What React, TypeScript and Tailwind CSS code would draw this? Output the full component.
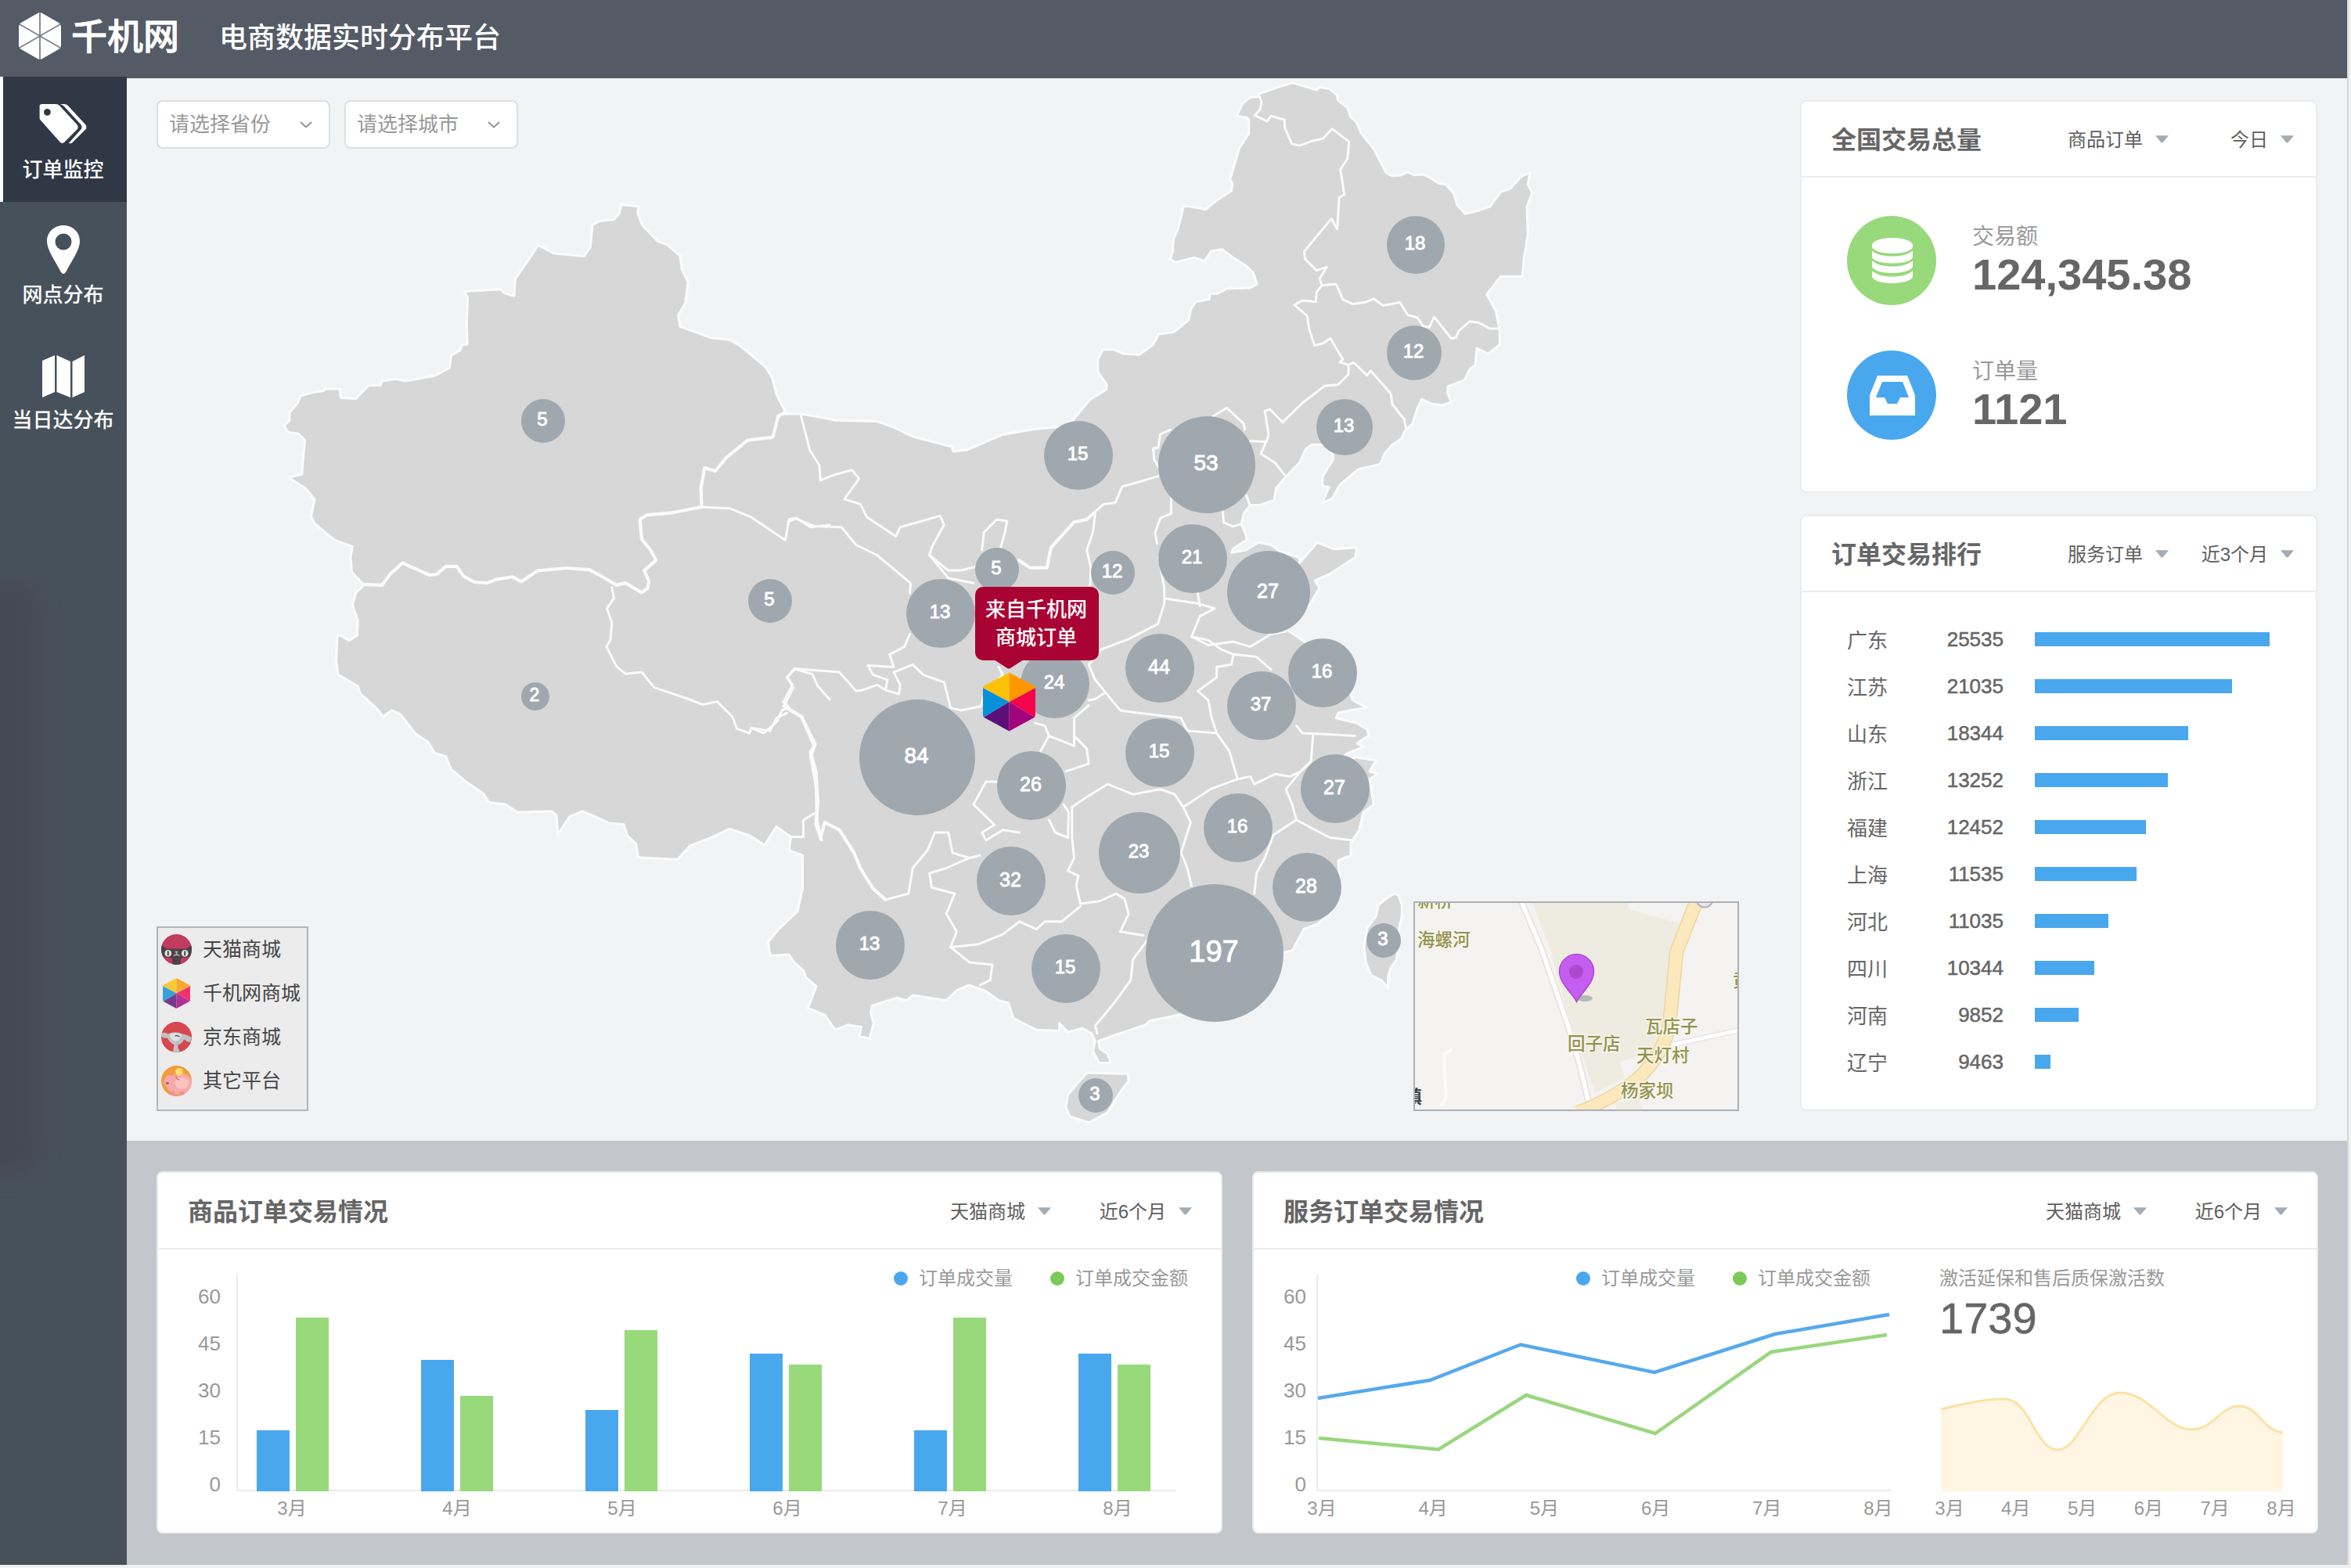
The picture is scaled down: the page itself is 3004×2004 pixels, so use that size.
import React from "react";

type Tile = { x: number; y: number; sx: number; sy: number };

// Survey tiles: each one has its own origin and scale on the shared canvas.
const WEST: Tile = { x: 340, y: 240, sx: 0.4592, sy: 0.5612 };
const CORE: Tile = { x: 960, y: 420, sx: 0.5357, sy: 0.6505 };
const NORTH: Tile = { x: 1360, y: 90, sx: 0.3954, sy: 0.3827 };
const ISLE: Tile = { x: 1720, y: 1120, sx: 0.3571, sy: 0.3333 };

const trace = (t: Tile, s: string) =>
  s
    .trim()
    .split(/\s+/)
    .map((p) => {
      const [a, b] = p.split(",").map(Number);
      return `${(t.x + a * t.sx).toFixed(1)},${(t.y + b * t.sy).toFixed(1)}`;
    })
    .join(" ");

const MAINLAND = [
  trace(
    WEST,
    "50,543 65,530 65,512 88,490 95,474 130,466 160,462 165,458 205,458 208,478 250,480 285,450 318,450 322,440 362,435 388,440 470,428 510,410 515,382 540,370 545,358 560,356 558,310 561,250 552,236 652,231 665,240 690,246 693,208 735,158 757,130 800,149 885,156 902,135 908,85 925,76 968,72 982,60 988,38 1036,42 1034,58 1047,85 1090,122 1115,129 1152,155 1157,185 1174,215 1167,262 1147,290 1152,316 1200,330 1240,342 1290,346 1320,360 1390,408 1408,432 1420,470 1442,505 1443,515 1490,515 1560,525"
  ),
  trace(CORE, "200,180 300,182 335,192 385,212 478,232 482,241 515,238 600,208 670,198 735,193 765,182 790,157"),
  trace(
    NORTH,
    "82,1100 135,1065 137,1049 108,1008 108,965 125,932 160,932 190,946 242,949 285,918 305,880 355,873 402,833 408,800 424,773 468,764 470,746 495,745 525,728 600,726 623,714 610,675 590,655 545,625 510,598 475,603 453,637 420,625 360,641 342,632 350,605 352,565 366,533 386,450 457,464 492,434 540,402 543,378 535,365 565,260 596,210 596,165 588,157 557,153 575,112 600,90 628,88 628,78 695,54 738,41 815,65 825,56 858,62 880,82 885,100 915,125 925,155 943,172 960,210 1000,262 1040,342 1060,352 1085,350 1110,340 1130,349 1160,347 1185,360 1210,377 1232,380 1258,410 1270,450 1295,479 1330,470 1375,455 1410,405 1440,395 1475,355 1505,340 1498,380 1512,410 1495,455 1498,550 1485,630 1480,688 1410,688 1390,715 1365,748 1395,805 1407,870 1407,915 1370,947 1333,928 1328,985 1310,997 1292,1035 1240,1055 1238,1075 1250,1108 1220,1118 1185,1113 1155,1098 1140,1130 1125,1180 1100,1205 1090,1230 1060,1250 1035,1280 1020,1315 950,1332 890,1385 865,1430 832,1446 855,1392 833,1388 835,1355 868,1300 868,1285 850,1250 800,1250 780,1265 760,1310 715,1358 685,1395 678,1435 630,1452 600,1452 580,1480 572,1515 585,1545"
  ),
  trace(
    CORE,
    "1182,415 1150,432 1145,440 1180,435 1210,420 1240,425 1260,437 1308,450 1308,460 1350,420 1390,433 1445,430 1440,450 1380,482 1345,495 1355,510 1330,545 1275,590 1310,610 1370,640 1420,700 1435,730 1468,745 1430,750 1400,755 1395,765 1445,775 1470,788 1472,800 1445,815 1460,822 1420,835 1400,855 1440,842 1490,848 1475,870 1495,875 1475,885 1480,910 1485,935 1460,950 1450,985 1430,1010 1430,1035 1400,1045 1405,1100 1380,1150 1350,1170 1318,1180 1290,1222 1260,1228 1240,1280 1150,1330 1010,1350 950,1360 940,1368 860,1390 828,1400 832,1415 850,1425 858,1443 830,1443 815,1420 820,1400 812,1385 790,1375 755,1382 735,1365 735,1380 680,1378 625,1355 613,1325 590,1320 560,1302 520,1290 490,1300 465,1320 385,1310 370,1320 348,1315 288,1330 285,1345 292,1365 282,1395 258,1390 262,1372 230,1368 200,1378 175,1348 135,1335 155,1292 130,1275 125,1262 102,1245 90,1230 45,1232 40,1205 65,1180 110,1145 122,1100 122,1035 90,1025"
  ),
  trace(
    WEST,
    "1460,1478 1420,1455 1387,1497 1345,1475 1290,1460 1230,1483 1180,1498 1145,1530 1035,1525 1030,1495 1005,1475 995,1450 955,1447 910,1430 880,1420 845,1432 812,1473 808,1430 795,1420 700,1422 665,1404 620,1400 605,1380 560,1355 515,1325 500,1295 470,1288 450,1262 415,1243 375,1200 350,1190 325,1205 310,1188 262,1152 255,1135 200,1108 195,1080 198,1020 210,1020 230,1031 253,1020 255,985 240,950 250,922 272,905 238,875 235,840 240,817 190,802 135,765 125,748 135,710 110,685 62,660 100,652 103,615 108,575 90,560 62,557"
  ),
].join(" ");

const ISLANDS = [
  trace(CORE, "800,1462 898,1464 900,1478 880,1500 850,1540 805,1560 760,1548 750,1530 755,1505"),
  trace(
    ISLE,
    "172,66 187,72 200,110 200,150 190,200 188,270 180,320 160,350 150,385 150,430 128,400 90,380 70,330 64,270 75,200 108,150 115,110 150,80"
  ),
];

const THICK = [
  trace(
    WEST,
    "272,903 322,905 345,880 380,854 400,862 455,882 475,880 500,862 530,862 550,885 580,898 615,900 640,892 685,886 710,897 755,872 835,866 900,870 945,890 975,905 1000,900 1045,922 1062,912 1065,895 1052,872 1085,848 1070,825 1045,800 1040,755 1060,745 1130,740 1212,727 1210,685 1220,638 1250,645 1280,615 1340,575 1410,568 1425,520 1443,512"
  ),
  trace(WEST, "1440,1170 1460,1190 1490,1205 1528,1268 1515,1285 1530,1330 1535,1400 1530,1450 1545,1485"),
  trace(CORE, "78,742 120,762 150,820 142,840 155,900 157,970 165,1000 175,970 210,985 245,1030 260,1060 290,1100 320,1122"),
  trace(CORE, "638,455 665,470 705,470 715,430 770,380 800,375 820,360"),
];

const THIN = [
  trace(
    WEST,
    "962,910 968,935 948,958 962,990 958,1030 947,1045 975,1090 1000,1107 1045,1103 1080,1138 1160,1160 1215,1177 1255,1170 1298,1205 1310,1232 1345,1242 1350,1230 1385,1242 1422,1215 1435,1190 1450,1185"
  ),
  trace(WEST, "1212,727 1290,730 1350,750 1445,803 1455,755 1475,752 1515,773 1568,768"),
  trace(WEST, "1568,1165 1535,1135 1520,1108 1470,1095 1450,1115 1465,1132 1440,1170"),
  trace(WEST, "1525,1425 1495,1440 1495,1478 1460,1478"),
  trace(
    CORE,
    "118,170 140,240 162,268 165,298 195,288 240,278 257,295 222,335 260,345 275,370 345,408 355,390 450,368 460,385 430,430 425,445 470,475 500,475 535,468"
  ),
  trace(CORE, "88,380 105,373 150,388 215,390 250,425 300,445 380,500 378,520"),
  trace(CORE, "425,445 470,490 530,500"),
  trace(
    CORE,
    "378,600 365,625 330,640 340,665 278,662 290,680 325,690 320,710 352,718 355,700 340,675 385,660 410,680 460,695 475,745 500,750 548,742 555,720 600,680 590,665"
  ),
  trace(CORE, "320,710 300,700 265,710 250,712 210,675 130,670 105,668 85,685 100,705 78,742"),
  trace(CORE, "0,785 45,790 60,765 85,755"),
  trace(CORE, "320,1122 375,1110 385,1060 420,1025 438,990 470,990 480,1030 520,1040 545,1035"),
  trace(CORE, "550,435 555,400 585,375 610,378 605,400 595,430"),
  trace(CORE, "820,360 840,345 868,342 885,310 930,300 970,290"),
  trace(CORE, "820,365 815,400 800,435 810,470 808,505"),
  trace(CORE, "972,450 985,510 985,540 970,580 900,610 835,630 805,660 820,690 845,715 820,728 805,730"),
  trace(CORE, "845,715 880,750 920,755 1025,765 1040,790 1110,795 1140,830 1160,885"),
  trace(
    CORE,
    "985,530 1065,540 1105,550 1070,565 1050,605 1090,612 1120,630 1150,640 1145,660 1110,665 1110,685 1065,712 1090,730 1098,765 1110,795"
  ),
  trace(CORE, "1050,605 1090,622 1150,615 1190,625 1240,600 1275,595"),
  trace(CORE, "1065,520 1070,545"),
  trace(CORE, "1150,640 1205,645 1240,670"),
  trace(CORE, "1300,780 1315,795 1375,797 1440,800"),
  trace(CORE, "1340,797 1335,850 1310,870 1275,905"),
  trace(CORE, "1160,885 1190,880 1200,895 1250,875 1285,880 1310,870"),
  trace(CORE, "677,775 700,780 710,800 690,830"),
  trace(CORE, "710,800 770,820 770,765 805,740"),
  trace(CORE, "770,800 800,825 805,855 750,870"),
  trace(CORE, "765,940 800,920 850,895 910,915 975,905 1010,915 1030,940 1095,905 1160,885"),
  trace(
    CORE,
    "765,940 765,1000 770,1040 755,1065 780,1075 775,1095 785,1130 830,1125 870,1110 890,1120 900,1150 880,1185 935,1192"
  ),
  trace(CORE, "1030,940 1048,970 1025,1030 1040,1060 1050,1095"),
  trace(CORE, "1275,905 1290,935 1300,965 1245,995 1225,1040 1205,1070 1200,1110"),
  trace(CORE, "1300,965 1345,985 1380,1000 1430,1005"),
  trace(
    CORE,
    "785,1135 740,1165 700,1165 680,1180 640,1165 600,1190 540,1210 475,1215 490,1185 465,1150 485,1110 430,1098 425,1070 465,1060 520,1040"
  ),
  trace(CORE, "475,1215 520,1245 575,1250 570,1280 545,1290"),
  trace(CORE, "590,890 560,890 530,935 580,975 550,990 560,1005 600,985 640,990"),
  trace(CORE, "710,965 725,990 755,1000 757,950 745,935"),
  trace(CORE, "950,1195 910,1240 905,1280 870,1320 820,1370 825,1385"),
  trace(
    NORTH,
    "628,80 637,105 633,130 615,150 655,170 668,152 712,165 712,190 735,245 760,251 800,236 835,228 865,195 920,238 915,295 892,330 905,415 888,425 882,530 863,495 775,605 778,630 815,668 848,657 825,695 832,718"
  ),
  trace(
    NORTH,
    "832,718 878,713 900,765 932,780 970,775 1000,763 1030,785 1085,775 1110,817 1140,825 1160,855 1180,857 1195,823 1250,895 1265,893 1275,870 1310,838 1340,843 1375,862 1405,862"
  ),
  trace(NORTH, "832,718 815,740 812,773 770,768 743,783 785,820 790,860 808,918 835,912 860,895 900,965 890,975 918,983"),
  trace(NORTH, "918,983 935,976 978,1018 990,1003 1055,1080 1060,1115 1098,1165 1105,1200"),
  trace(
    NORTH,
    "918,983 918,1015 885,1050 842,1053 770,1110 705,1175 665,1132 648,1137 660,1220 635,1280 680,1310 715,1355"
  ),
  trace(NORTH, "480,1155 525,1127 580,1180 583,1200"),
  trace(NORTH, "600,1238 650,1240"),
  trace(NORTH, "343,1200 310,1215 303,1260 287,1262 290,1300 305,1325"),
  trace(NORTH, "345,1430 345,1480 310,1495 293,1545 300,1580"),
  trace(NORTH, "588,1420 600,1452"),
  trace(NORTH, "512,1475 515,1510 545,1523 572,1515"),
];

// [label, centre x, centre y, diameter, font size]
const BUBBLES: [string, number, number, number, number][] = [
  ["5", 694, 538, 56, 24],
  ["5", 984, 768, 56, 24],
  ["2", 684, 890, 36, 23],
  ["15", 1378, 582, 88, 24],
  ["53", 1542, 594, 124, 28],
  ["21", 1524, 714, 88, 24],
  ["12", 1422, 732, 56, 24],
  ["27", 1621, 757, 106, 25],
  ["5", 1274, 728, 56, 24],
  ["13", 1202, 784, 88, 24],
  ["24", 1348, 874, 88, 24],
  ["44", 1482, 854, 88, 25],
  ["16", 1690, 860, 88, 24],
  ["37", 1612, 902, 88, 24],
  ["84", 1172, 968, 148, 28],
  ["15", 1482, 962, 88, 24],
  ["26", 1318, 1004, 88, 25],
  ["27", 1706, 1008, 88, 25],
  ["23", 1456, 1090, 104, 24],
  ["16", 1582, 1058, 88, 24],
  ["32", 1292, 1126, 88, 25],
  ["28", 1670, 1134, 88, 25],
  ["197", 1552, 1218, 176, 38],
  ["13", 1112, 1208, 88, 24],
  ["15", 1362, 1238, 88, 24],
  ["3", 1400, 1400, 44, 24],
  ["3", 1768, 1202, 44, 24],
  ["18", 1809, 313, 74, 24],
  ["12", 1807, 451, 70, 24],
  ["13", 1718, 546, 72, 24],
];

const RANKS: [string, string, number][] = [
  ["广东", "25535", 300],
  ["江苏", "21035", 252],
  ["山东", "18344", 196],
  ["浙江", "13252", 170],
  ["福建", "12452", 142],
  ["上海", "11535", 130],
  ["河北", "11035", 94],
  ["四川", "10344", 76],
  ["河南", "9852", 56],
  ["辽宁", "9463", 20],
];

const MONTHS = ["3月", "4月", "5月", "6月", "7月", "8月"];
const BARS: [number, number][] = [
  [78, 222],
  [168, 122],
  [104, 206],
  [176, 162],
  [78, 222],
  [176, 162],
];

function ColorHex({ className }: { className: string }) {
  return (
    <svg viewBox="0 0 68 76" className={className}>
      <path d="M34 38V0L2 17Q0 18 0 20Z" fill="#ffc107" />
      <path d="M34 38V0L66 17Q68 18 68 20Z" fill="#ff9800" />
      <path d="M34 38L68 20V54Q68 57 67 58Z" fill="#f4044b" />
      <path d="M34 38L67 58L34 76Z" fill="#a1047d" />
      <path d="M34 38L1 58L34 76Z" fill="#5b0f77" />
      <path d="M34 38L0 20V54Q0 57 1 58Z" fill="#0790da" />
    </svg>
  );
}

function Dropdown({ label, wide }: { label: string; wide?: string }) {
  return (
    <div className={`flex items-center justify-end gap-4 text-2xl leading-8 text-[#5e5e5e] ${wide ?? ""}`}>
      <span className="pt-0.5 whitespace-nowrap">{label}</span>
      <svg viewBox="0 0 18 10" className="h-2.5 w-[17px]">
        <path d="M0 0H18L11 8.5Q9 11 7 8.5Z" fill="#a3abb3" />
      </svg>
    </div>
  );
}

function Card({
  title,
  first,
  second,
  className,
  headClass,
  wide,
  children,
}: {
  title: string;
  first: string;
  second: string;
  className: string;
  headClass: string;
  wide: string;
  children: React.ReactNode;
}) {
  return (
    <section className={`flex shrink-0 flex-col rounded-lg border-2 border-[#ebecee] bg-white ${className}`}>
      <div className={`flex shrink-0 items-center border-b-2 border-[#ebecee] pl-[38px] ${headClass}`}>
        <h2 className="flex-1 pt-0.5 text-[32px] leading-10 font-bold text-[#666]">{title}</h2>
        <Dropdown label={first} />
        <Dropdown label={second} wide={wide} />
      </div>
      {children}
    </section>
  );
}

function Select({ label }: { label: string }) {
  return (
    <div className="flex h-[62px] w-[222px] items-center justify-between rounded-lg border-2 border-[#dcdee0] bg-white pr-[21px] pl-3.5">
      <span className="text-[26px] leading-8 text-[#999]">{label}</span>
      <svg viewBox="0 0 16 9" className="h-[9px] w-4" fill="none" stroke="#8f8f8f" strokeWidth="1.8">
        <path d="M1 1L8 7.5L15 1" />
      </svg>
    </div>
  );
}

function NavItem({ label, active, children }: { label: string; active?: boolean; children: React.ReactNode }) {
  return (
    <div
      className={`flex h-40 shrink-0 flex-col items-center pt-[35px] ${
        active ? "border-l-4 border-white bg-[#303846] pr-[5px]" : "pr-px"
      }`}
    >
      <div className="flex h-[68px] items-start justify-center">{children}</div>
      <span className="text-[26px] leading-8 font-medium whitespace-nowrap text-white">{label}</span>
    </div>
  );
}

function YAxis({ className }: { className: string }) {
  return (
    <div className={`flex shrink-0 flex-col text-right text-[26px] text-[#999] ${className}`}>
      {["60", "45", "30", "15", "0"].map((v) => (
        <span key={v} className="h-[60px] shrink-0 leading-[58px]">
          {v}
        </span>
      ))}
    </div>
  );
}

function ChartLegend({ className }: { className: string }) {
  return (
    <div className={`absolute flex items-center text-2xl leading-[30px] text-[#999] ${className}`}>
      <i className="mr-3.5 size-[18px] rounded-full bg-[#49a7ee]" />
      <span>订单成交量</span>
      <i className="mr-3.5 ml-12 size-[18px] rounded-full bg-[#7aca57]" />
      <span>订单成交金额</span>
    </div>
  );
}

function MonthRow({ className }: { className: string }) {
  return (
    <div className={`flex justify-between text-2xl leading-[30px] text-[#999] ${className}`}>
      {MONTHS.map((m) => (
        <span key={m} className="w-10 text-center">
          {m}
        </span>
      ))}
    </div>
  );
}

function ChinaMap() {
  return (
    <svg viewBox="162 100 2139 1358" className="absolute top-0 left-0 h-[1358px] w-[2139px]">
      <g fill="#d7d7d7" stroke="#fafbfb" strokeLinejoin="round">
        <polygon points={MAINLAND} strokeWidth="3.2" />
        {ISLANDS.map((p) => (
          <polygon key={p} points={p} strokeWidth="3.2" />
        ))}
      </g>
      <g fill="none" stroke="#fafbfb" strokeLinejoin="round" strokeLinecap="round">
        {THIN.map((p) => (
          <polyline key={p} points={p} strokeWidth="3" />
        ))}
        {THICK.map((p) => (
          <polyline key={p} points={p} strokeWidth="4.2" />
        ))}
      </g>
    </svg>
  );
}

function MiniMap() {
  const label = (x: number, y: number, t: string) => (
    <text
      x={x}
      y={y + 8}
      fontSize="22.5"
      fill="#94934f"
      stroke="#f7f6ee"
      strokeWidth="3"
      paintOrder="stroke"
      fontWeight="500"
    >
      {t}
    </text>
  );
  return (
    <div className="absolute top-[1052px] left-[1644px] h-[268px] w-[416px] overflow-hidden border-2 border-[#abb1b7] bg-[#f4f3f1]">
      <svg viewBox="2 2 412 264" className="h-full w-full">
        <g transform="scale(.3571 .3333) translate(-241 -96)" fill="none">
          <path
            d="M665 96H1000L1020 130L1195 180L1160 290L1135 540L1100 670L980 712L995 775L890 830L780 480L730 280Z"
            fill="#eeece1"
          />
          <path d="M965 870L1050 850L1060 900H965Z" fill="#eeece1" />
          <path d="M1170 645L1406 590" stroke="#e6e4e4" strokeWidth="22" />
          <path d="M1170 645L1406 590" stroke="#ffffff" strokeWidth="14" />
          <path d="M625 90L700 280L790 560Q840 720 868 870" stroke="#e5e4e4" strokeWidth="25" />
          <path d="M625 90L700 280L790 560Q840 720 868 870" stroke="#ffffff" strokeWidth="15" />
          <path d="M380 665L350 680L358 850L340 880" stroke="#fbfbfb" strokeWidth="12" />
          <path d="M1255 90L1182 292L1158 560Q1140 680 1040 780Q960 850 830 905" stroke="#f0d7a2" strokeWidth="52" />
          <path d="M1255 90L1182 292L1158 560Q1140 680 1040 780Q960 850 830 905" stroke="#fbe8bd" strokeWidth="43" />
        </g>
        <circle cx="372" cy="-3" r="10.5" fill="#e9e8e8" stroke="#b5b3b3" strokeWidth="2" />
        {label(5, -1, "新桥")}
        {label(5, 49, "海螺河")}
        {label(197, 182, "回子店")}
        {label(296, 160, "瓦店子")}
        {label(285, 197, "天灯村")}
        {label(265, 242, "杨家坝")}
        {label(408, 101, "黄")}
        <text x="-12" y="258" fontSize="23" fontWeight="700" fill="#444">
          镇
        </text>
        <ellipse cx="219" cy="124" rx="10" ry="4" fill="#8b9a9a" opacity=".6" />
        <path
          d="M208.500 128.500C203 117 186.500 105 186.500 89.500A22 22 0 0 1 230.500 89.500C230.500 105 214 117 208.500 128.500Z"
          fill="#c45df0"
          stroke="#ad4ad2"
          strokeWidth="1.500"
        />
        <circle cx="208" cy="90" r="9" fill="#ad49cd" />
      </svg>
    </div>
  );
}

function TmallIcon() {
  return (
    <svg viewBox="0 0 40 40" className="size-[39px]">
      <clipPath id="tm">
        <circle cx="20" cy="20" r="20" />
      </clipPath>
      <g clipPath="url(#tm)">
        <rect width="40" height="40" fill="#c23a5c" />
        <path d="M0 14L7 19H33L40 14V28Q36 31 26 31L25 40H15L14 31Q4 31 0 28Z" fill="#4a4346" />
        <circle cx="9" cy="25" r="4.500" fill="#e4dfe0" />
        <circle cx="31" cy="25" r="4.500" fill="#e4dfe0" />
        <path d="M8 22H10V28H8ZM30 22H32V28H30Z" fill="#4a4346" />
        <path d="M18 23H22M20 23V27M16 28Q20 26 24 28" stroke="#bdb6b8" strokeWidth="1.500" fill="none" />
      </g>
    </svg>
  );
}

function DogIcon() {
  return (
    <svg viewBox="0 0 40 40" className="size-[39px]">
      <clipPath id="jd">
        <circle cx="20" cy="20" r="20" />
      </clipPath>
      <g clipPath="url(#jd)">
        <rect width="40" height="40" fill="#d8464e" />
        <path
          d="M0 15Q5 13 9 16Q18 11 28 16Q35 17 40 21L38 27Q33 26 30 23Q27 29 22 30V34L25 40H15L17 30Q11 27 8 21Q3 22 0 19Z"
          fill="#c0c1c4"
        />
        <path d="M11 17Q18 12 27 17Q23 27 17 25Q12 23 11 17Z" fill="#dfe0e1" />
        <path d="M18 18.500Q21 17 24 19.500" stroke="#55585c" strokeWidth="1.600" fill="none" />
      </g>
    </svg>
  );
}

function PiggyIcon() {
  return (
    <svg viewBox="0 0 40 40" className="size-[39px]">
      <clipPath id="pg">
        <circle cx="20" cy="20" r="20" />
      </clipPath>
      <g clipPath="url(#pg)">
        <rect width="40" height="40" fill="#f29b3e" />
        <ellipse cx="24" cy="24" rx="17" ry="14" fill="#f6a9ab" />
        <path d="M6 14L12 12L16 20L12 30Q5 28 3 22Z" fill="#f6a9ab" />
        <path d="M12 34H18V40H12ZM24 34H30V40H24Z" fill="#ee8f95" />
        <ellipse cx="27" cy="23" rx="9" ry="8" fill="#fbc2c0" />
        <circle cx="23.500" cy="8" r="5" fill="#ffe066" />
        <path d="M19 13Q20 19 24 18" stroke="#d9777f" strokeWidth="1.400" fill="none" />
        <ellipse cx="8" cy="23" rx="2.200" ry="1.500" fill="#a85a60" />
      </g>
    </svg>
  );
}

function MallLegend() {
  const rows: [string, React.ReactNode][] = [
    ["天猫商城", <TmallIcon key="t" />],
    ["千机网商城", <ColorHex key="q" className="mx-0.5 h-[39px] w-[35px] opacity-80" />],
    ["京东商城", <DogIcon key="j" />],
    ["其它平台", <PiggyIcon key="p" />],
  ];
  return (
    <div className="absolute top-[1084px] left-[38px] h-[236px] w-[194px] border-2 border-[#b1b4b9] bg-[#ececec]">
      {rows.map(([name, icon]) => (
        <div key={name} className="flex h-14 items-start pt-2">
          <span className="flex w-[57px] justify-start pl-1">{icon}</span>
          <span className="pt-[3px] text-[25px] leading-8 whitespace-nowrap text-[#444]">{name}</span>
        </div>
      ))}
    </div>
  );
}

function OrderTip() {
  return (
    <div className="absolute top-[650px] left-[1084px] w-[158px]">
      <div className="rounded-[10px] bg-[#a90333] py-[11px] pr-0.5 text-center text-[26px] leading-9 font-medium text-white">
        来自千机网
        <br />
        商城订单
      </div>
      <svg viewBox="0 0 38 12" className="-mt-px ml-6 h-3 w-[38px]">
        <path d="M0 0H38L21 11Q19 12 17 11Z" fill="#a90333" />
      </svg>
      <ColorHex className="mt-1 ml-[10px] h-[76px] w-[67px]" />
    </div>
  );
}

function Summary() {
  return (
    <div className="flex flex-col gap-[58px] px-[58px] pt-[49px]">
      <div className="flex items-start gap-[46px]">
        <div className="flex size-[114px] items-center justify-center rounded-full bg-[#98d97c]">
          <svg viewBox="0 0 52 58" className="ml-0.5 h-[58px] w-[52px]" fill="#fff">
            <path d="M0 9.500C0 4 12 0 26 0S52 4 52 9.500V11C52 16 40 20 26 20S0 16 0 11Z" />
            <path d="M0 16.500C5 21 15 23.500 26 23.500S47 21 52 16.500V24C52 29 40 32.500 26 32.500S0 29 0 24Z" />
            <path d="M0 29C5 34 15 36.500 26 36.500S47 34 52 29V36C52 41 40 45 26 45S0 41 0 36Z" />
            <path d="M0 42C5 47 15 49.500 26 49.500S47 47 52 42V49C52 54 40 58 26 58S0 54 0 49Z" />
          </svg>
        </div>
        <div className="pt-[9px]">
          <div className="text-[28px] leading-9 text-[#999]">交易额</div>
          <div className="text-[56px] leading-[60px] font-bold text-[#666]">124,345.38</div>
        </div>
      </div>
      <div className="flex items-start gap-[46px]">
        <div className="flex size-[114px] items-center justify-center rounded-full bg-[#49a7ee]">
          <svg viewBox="0 0 58 51" className="ml-0.5 h-[51px] w-[58px]" fill="#fff" fillRule="evenodd">
            <path d="M10 0H48L58 25V51H0V25ZM16 8L8 28H19L23 36H35L39 28H50L42 8Z" />
          </svg>
        </div>
        <div className="pt-[9px]">
          <div className="text-[28px] leading-9 text-[#999]">订单量</div>
          <div className="text-[56px] leading-[60px] font-bold text-[#666]">1121</div>
        </div>
      </div>
    </div>
  );
}

export default function App() {
  return (
    <div className="h-[2004px] w-[3004px] overflow-hidden bg-[#f0f0f1] font-['Liberation_Sans','Noto_Sans_CJK_SC',sans-serif]">
      <div className="flex h-[2000px] w-[3001px] flex-col border-r-2 border-[#d5d7da]">
        <header className="flex h-[100px] shrink-0 items-center bg-[#545b66] pb-1.5 pl-6 text-white">
          <svg viewBox="0 0 54 60" className="-mt-0.5 h-[60px] w-[54px]">
            <path
              d="M24 1Q27 -1 30 1L51 13Q54 15 54 18V42Q54 45 51 47L30 59Q27 61 24 59L3 47Q0 45 0 42V18Q0 15 3 13Z"
              fill="#fff"
            />
            <path d="M27 0V60M1 15L53 45M53 15L1 45" stroke="#7d828a" strokeWidth="1.800" />
          </svg>
          <span className="ml-[13px] text-[46px] leading-[60px] font-medium [-webkit-text-stroke:0.8px_#fff]">
            千机网
          </span>
          <h1 className="ml-[51px] pt-[3px] text-[36px] leading-[50px] font-medium">电商数据实时分布平台</h1>
        </header>

        <div className="flex min-h-0 flex-1">
          <nav className="relative -mt-0.5 flex w-[162px] shrink-0 flex-col overflow-hidden bg-[#47515b]">
            <div className="absolute top-[650px] -left-5 h-[750px] w-[66px] rounded-r-3xl bg-[#454955] blur-[14px]" />
            <NavItem label="订单监控" active>
              <svg viewBox="0 0 62 52" className="h-[51px] w-[62px]" fill="#fff" fillRule="evenodd">
                <path d="M3 0H21Q24 0 26 2L49 27Q51 30 49 33L32 50Q29 52 27 50L2 22Q0 20 0 18V3Q0 0 3 0ZM10 6A4.500 4.500 0 1 0 10 15A4.500 4.500 0 1 0 10 6Z" />
                <path d="M26 0H32Q35 0 37 2L60 27Q62 30 60 33L43 50Q41 52 38 51L54 33Q56 30 54 27L32 3Q29 0 26 0Z" />
              </svg>
            </NavItem>
            <NavItem label="网点分布">
              <svg viewBox="0 0 42 62" className="-mt-[5px] h-[62px] w-[42px]" fill="#fff" fillRule="evenodd">
                <path d="M21 0C33 0 42 9 42 20C42 32 32 44 24 60Q21 64 18 60C10 44 0 32 0 20C0 9 9 0 21 0ZM21 10.500A10.500 10.500 0 1 0 21 31.500A10.500 10.500 0 1 0 21 10.500Z" />
              </svg>
            </NavItem>
            <NavItem label="当日达分布">
              <svg viewBox="0 0 54 54" className="mt-px h-[54px] w-[54px]" fill="#fff">
                <path d="M0 7L16 0V47L0 54ZM18.500 0L36 8V54L18.500 47ZM38.500 8L54 0V47L38.500 54Z" />
              </svg>
            </NavItem>
          </nav>

          <main className="flex min-w-0 flex-1 flex-col">
            <div className="flex h-[1358px] shrink-0 bg-[#f1f3f5]">
              <div className="relative w-[2138px] shrink-0">
                <ChinaMap />
                {BUBBLES.map(([n, x, y, d, f], i) => (
                  <div
                    key={i}
                    className="absolute flex items-center justify-center rounded-full bg-[#a0a8af] pr-0.5 pb-1 leading-none text-white [-webkit-text-stroke:0.9px_#fff]"
                    style={{ left: x - 162 - d / 2, top: y - 100 - d / 2, width: d, height: d, fontSize: f }}
                  >
                    {n}
                  </div>
                ))}
                <OrderTip />
                <div className="relative flex gap-[18px] pt-7 pl-[38px]">
                  <Select label="请选择省份" />
                  <Select label="请选择城市" />
                </div>
                <MallLegend />
                <MiniMap />
              </div>
              <aside className="flex w-[661px] shrink-0 flex-col gap-[28px] pt-7">
                <Card
                  title="全国交易总量"
                  first="商品订单"
                  second="今日"
                  className="h-[502px]"
                  headClass="h-[97px] pr-7"
                  wide="w-40"
                >
                  <Summary />
                </Card>
                <Card
                  title="订单交易排行"
                  first="服务订单"
                  second="近3个月"
                  className="h-[762px]"
                  headClass="h-[97px] pr-7"
                  wide="w-40"
                >
                  <div className="flex flex-col pt-[30px]">
                    {RANKS.map(([name, n, w]) => (
                      <div key={name} className="flex h-[60px] items-center pl-[58px] text-[26px] leading-8 text-[#666]">
                        <span className="w-[100px] pt-[3px]">{name}</span>
                        <span className="w-[100px] text-right [-webkit-text-stroke:0.5px_#666]">{n}</span>
                        <i className="ml-10 h-[18px] bg-[#49a7ee]" style={{ width: w }} />
                      </div>
                    ))}
                  </div>
                </Card>
              </aside>
            </div>

            <div className="flex flex-1 gap-[38px] bg-[#c3c6cb] pt-[39px] pl-[38px]">
              <Card
                title="商品订单交易情况"
                first="天猫商城"
                second="近6个月"
                className="relative h-[463px] w-[1362px]"
                headClass="h-[98px] pt-0.5 pr-[37px]"
                wide="w-[180px]"
              >
                <ChartLegend className="top-[120px] right-[42px]" />
                <div className="flex pt-[31px]">
                  <YAxis className="w-[80px]" />
                  <div className="ml-5">
                    <div className="flex h-[278px] w-[1201px] items-end gap-[118px] border-l-2 border-[#ebebeb] pl-6 shadow-[inset_0_-2px_0_#ebebeb]">
                      {BARS.map(([b, g], i) => (
                        <div key={i} className="flex items-end gap-2">
                          <i className="w-[42px] bg-[#49a7ee]" style={{ height: b }} />
                          <i className="w-[42px] bg-[#98d97c]" style={{ height: g }} />
                        </div>
                      ))}
                    </div>
                    <MonthRow className="mt-[7px] ml-[51px] w-[1095px]" />
                  </div>
                </div>
              </Card>

              <Card
                title="服务订单交易情况"
                first="天猫商城"
                second="近6个月"
                className="relative h-[463px] w-[1362px]"
                headClass="h-[98px] pt-0.5 pr-[37px]"
                wide="w-[180px]"
              >
                <ChartLegend className="top-[120px] left-[412px]" />
                <div className="flex">
                  <div className="w-[868px] pt-[31px]">
                    <div className="flex h-[278px]">
                      <YAxis className="w-[67px]" />
                      <div className="ml-[13px] w-[734px] border-b-2 border-l-2 border-[#ebebeb]">
                        <svg viewBox="1684 1628 732 276" className="h-[276px] w-[732px]" fill="none" strokeWidth="4.5">
                          <polyline
                            points="1684,1787 1827,1764 1943,1718.5 2114,1754 2268,1705 2414,1680"
                            stroke="#56a9ec"
                          />
                          <polyline
                            points="1685,1838 1838,1852.5 1950,1783 2115,1832 2263,1728 2411,1706"
                            stroke="#9ad67f"
                          />
                        </svg>
                      </div>
                    </div>
                    <MonthRow className="mt-[7px] ml-[67px] w-[751px]" />
                  </div>
                  <div className="pt-[21px]">
                    <div className="pl-2 text-2xl leading-8 text-[#999]">激活延保和售后质保激活数</div>
                    <div className="mt-[5px] pl-2 text-[56px] leading-[60px] text-[#666] [-webkit-text-stroke:0.5px_#666]">
                      1739
                    </div>
                    <svg viewBox="2480 1774 437 132" className="mt-[59px] ml-2.5 h-[132px] w-[437px]">
                      <path
                        d="M2480 1801C2510 1794 2535 1788 2561 1788C2595 1788 2600 1853 2629 1853C2658 1853 2672 1780 2709 1780C2746 1780 2768 1827 2800 1827C2828 1827 2838 1797 2861 1797C2886 1797 2890 1828 2917 1831V1906H2480Z"
                        fill="#fef5e2"
                      />
                      <path
                        d="M2480 1801C2510 1794 2535 1788 2561 1788C2595 1788 2600 1853 2629 1853C2658 1853 2672 1780 2709 1780C2746 1780 2768 1827 2800 1827C2828 1827 2838 1797 2861 1797C2886 1797 2890 1828 2917 1831"
                        fill="none"
                        stroke="#fbe2a4"
                        strokeWidth="3"
                      />
                    </svg>
                    <MonthRow className="mt-[7px] ml-px w-[464px]" />
                  </div>
                </div>
              </Card>
            </div>
          </main>
        </div>
      </div>
    </div>
  );
}
